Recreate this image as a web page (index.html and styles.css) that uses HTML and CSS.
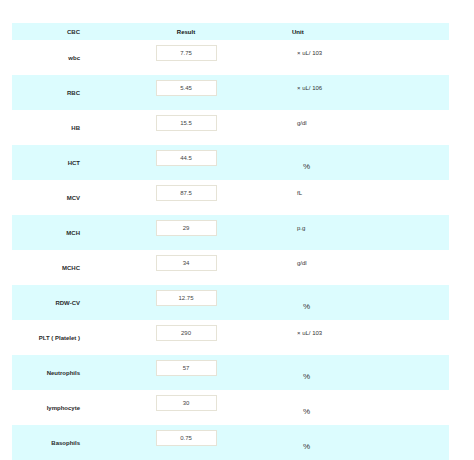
FILE: index.html
```html
<!DOCTYPE html>
<html>
<head>
<meta charset="utf-8">
<link rel="stylesheet" href="styles.css">
</head>
<body>
<div class="table">
  <div class="row head">
    <div class="c1">CBC</div>
    <div class="c2">Result</div>
    <div class="c3">Unit</div>
  </div>
  <div class="row">
    <div class="c1">wbc</div>
    <div class="c2"><div class="box">7.75</div></div>
    <div class="c3"><span class="unit">× uL/ 103</span></div>
  </div>
  <div class="row alt">
    <div class="c1">RBC</div>
    <div class="c2"><div class="box">5.45</div></div>
    <div class="c3"><span class="unit">× uL/ 106</span></div>
  </div>
  <div class="row">
    <div class="c1">HB</div>
    <div class="c2"><div class="box">15.5</div></div>
    <div class="c3"><span class="unit">g/dl</span></div>
  </div>
  <div class="row alt">
    <div class="c1">HCT</div>
    <div class="c2"><div class="box">44.5</div></div>
    <div class="c3"><span class="pct">%</span></div>
  </div>
  <div class="row">
    <div class="c1">MCV</div>
    <div class="c2"><div class="box">87.5</div></div>
    <div class="c3"><span class="unit">fL</span></div>
  </div>
  <div class="row alt">
    <div class="c1">MCH</div>
    <div class="c2"><div class="box">29</div></div>
    <div class="c3"><span class="unit">p.g</span></div>
  </div>
  <div class="row">
    <div class="c1">MCHC</div>
    <div class="c2"><div class="box">34</div></div>
    <div class="c3"><span class="unit">g/dl</span></div>
  </div>
  <div class="row alt">
    <div class="c1">RDW-CV</div>
    <div class="c2"><div class="box">12.75</div></div>
    <div class="c3"><span class="pct">%</span></div>
  </div>
  <div class="row">
    <div class="c1">PLT ( Platelet )</div>
    <div class="c2"><div class="box">290</div></div>
    <div class="c3"><span class="unit">× uL/ 103</span></div>
  </div>
  <div class="row alt">
    <div class="c1">Neutrophils</div>
    <div class="c2"><div class="box">57</div></div>
    <div class="c3"><span class="pct">%</span></div>
  </div>
  <div class="row">
    <div class="c1">lymphocyte</div>
    <div class="c2"><div class="box">30</div></div>
    <div class="c3"><span class="pct">%</span></div>
  </div>
  <div class="row alt">
    <div class="c1">Basophils</div>
    <div class="c2"><div class="box">0.75</div></div>
    <div class="c3"><span class="pct">%</span></div>
  </div>
</div>
</body>
</html>
```
FILE: styles.css
```css
html, body {
  margin: 0;
  padding: 0;
  background: #fff;
}
body {
  padding: 23px 0 0 12px;
  font-family: "Liberation Sans", Arial, sans-serif;
  font-size: 6px;
  color: #222;
}
.table {
  width: 437px;
}
.row {
  display: grid;
  grid-template-columns: 124px 100px 1fr;
  height: 35px;
}
.row.alt {
  background: #dcfcfe;
}
.row.head {
  height: 17px;
  background: #dcfcfe;
  font-weight: bold;
  color: #111;
}
.c1 {
  display: flex;
  align-items: center;
  justify-content: flex-end;
  padding-right: 56px;
  font-weight: bold;
  color: #2a2a2a;
}
.c2 {
  display: flex;
  justify-content: center;
  padding-top: 5px;
}
.c3 {
  padding-left: 61px;
  padding-top: 10px;
}
.head .c2 {
  align-items: center;
  padding-top: 0;
}
.head .c3 {
  display: flex;
  align-items: center;
  padding: 0 0 0 56px;
}
.box {
  width: 59px;
  height: 14px;
  border: 1px solid #e6e3d6;
  background: #fff;
  display: flex;
  align-items: center;
  justify-content: center;
  color: #444;
}
.unit {
  color: #333;
}
.pct {
  display: inline-block;
  margin-left: 6px;
  margin-top: 7px;
  font-size: 8px;
  color: #333;
}
```
